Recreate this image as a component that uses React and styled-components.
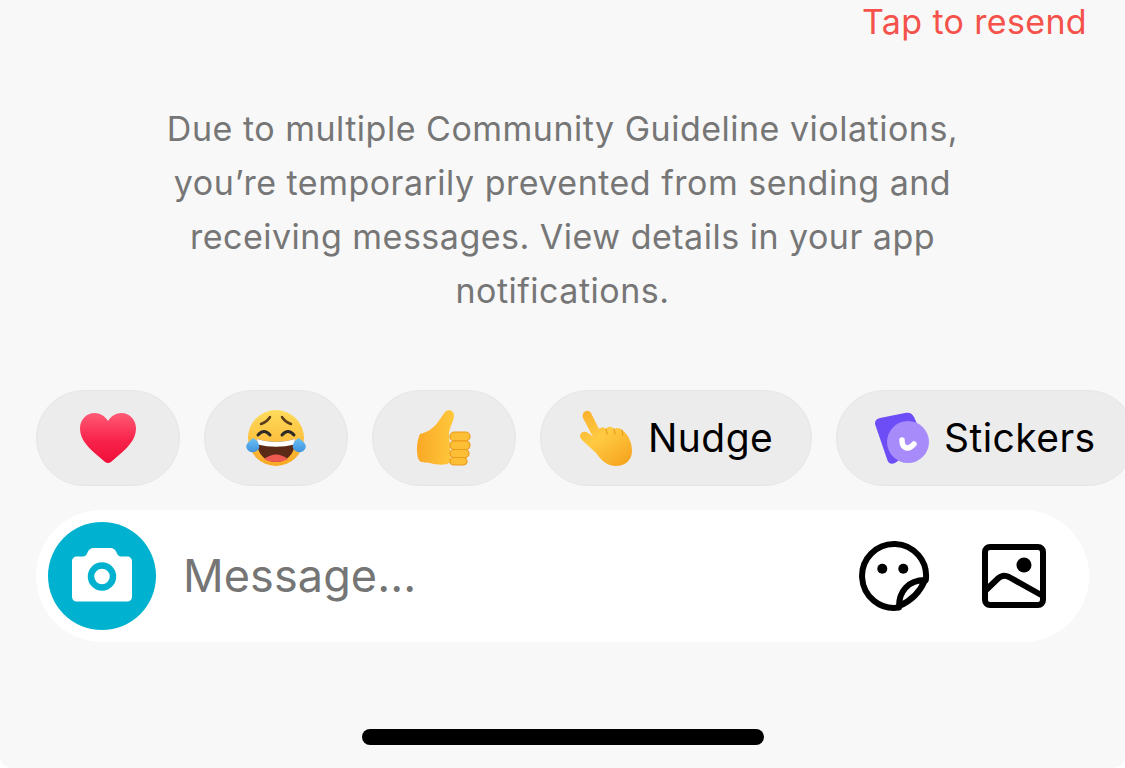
import styled, { createGlobalStyle } from 'styled-components';

const GlobalStyle = createGlobalStyle`
    html, body {
        margin: 0;
        padding: 0;
        background: #fff;
    }
    body {
        font-family: Inter, "Liberation Sans", sans-serif;
    }
`;

const chips = [
    { id: 'heart', Icon: () => <HeartEmoji />, width: 144 },
    { id: 'laugh', Icon: () => <LaughEmoji />, width: 144 },
    { id: 'thumb', Icon: () => <ThumbEmoji />, width: 144 },
    { id: 'nudge', Icon: () => <PointEmoji />, label: 'Nudge', width: 272 },
    { id: 'stickers', Icon: () => <StickerLogo />, label: 'Stickers', width: 300 },
];

const HeartEmoji = () => (
    <svg width="58" height="50" viewBox="0 0 58 50">
        <defs>
            <linearGradient id="heartFill" x1="0" y1="0" x2="0" y2="1">
                <stop offset="0" stopColor="#ff5a76" />
                <stop offset="0.55" stopColor="#f8234a" />
                <stop offset="1" stopColor="#ef0f3a" />
            </linearGradient>
        </defs>
        <path d="M29 50C27 50 25.500 48.500 22 45.500C10 35.500 1 27 1 15.500C1 6.500 7.500 0 15.500 0C21 0 26 3 29 8C32 3 37 0 42.500 0C50.500 0 57 6.500 57 15.500C57 27 48 35.500 36 45.500C32.500 48.500 31 50 29 50Z" fill="url(#heartFill)" />
    </svg>
);

const LaughEmoji = () => (
    <svg width="60" height="56" viewBox="0 0 60 56">
        <defs>
            <linearGradient id="faceFill" x1="0" y1="0" x2="0" y2="1">
                <stop offset="0" stopColor="#ffdc5c" />
                <stop offset="1" stopColor="#f9a825" />
            </linearGradient>
            <linearGradient id="tearFill" x1="0" y1="0" x2="0" y2="1">
                <stop offset="0" stopColor="#6cc0f5" />
                <stop offset="1" stopColor="#3f93de" />
            </linearGradient>
        </defs>
        <circle cx="30" cy="28" r="28" fill="url(#faceFill)" />
        <path d="M15 14Q21 12 24 7M45 14Q39 12 36 7" fill="none" stroke="#5b3d1d" strokeWidth="2.500" strokeLinecap="round" />
        <path d="M12 25Q18 18 24 25M36 25Q42 18 48 25" fill="none" stroke="#2d2a26" strokeWidth="3" strokeLinecap="round" />
        <path d="M11 29Q30 35 49 29C50 43 41 52 30 52C19 52 10 43 11 29Z" fill="#5b2a16" />
        <path d="M11 29Q30 35 49 29L48.500 34.500Q30 39 11.500 34.500Z" fill="#fff" />
        <path d="M18 49Q30 40 42 49Q37 52 30 52Q23 52 18 49Z" fill="#ef5a50" />
        <path d="M7 28C11 30 14 34 13 38C12 41 8 43 5 42C1 41 -1 37 1 34C2 32 5 30 7 28Z" fill="url(#tearFill)" />
        <path d="M53 28C49 30 46 34 47 38C48 41 52 43 55 42C59 41 61 37 59 34C58 32 55 30 53 28Z" fill="url(#tearFill)" />
    </svg>
);

const ThumbEmoji = () => (
    <svg width="54" height="56" viewBox="0 0 54 56">
        <defs>
            <linearGradient id="thumbFill" x1="0" y1="0" x2="1" y2="0">
                <stop offset="0" stopColor="#f9a825" />
                <stop offset="1" stopColor="#ffc83d" />
            </linearGradient>
        </defs>
        <path d="M3 24C10 22 16 19 21 12C24 8 26 4 29 1C32 -1 37 1 37 5C37 11 33 16 32 23L34 52C28 56 20 55 13 53C8 52 3 54 1 48C-1 40 0 30 3 24Z" fill="url(#thumbFill)" />
        <rect x="33" y="22" width="20" height="9" rx="4.500" fill="#fdbf35" stroke="#eb9a1c" strokeWidth="1.200" />
        <rect x="33" y="31" width="20" height="8.500" rx="4.200" fill="#fdbf35" stroke="#eb9a1c" strokeWidth="1.200" />
        <rect x="33" y="39.500" width="19" height="8" rx="4" fill="#fdbf35" stroke="#eb9a1c" strokeWidth="1.200" />
        <rect x="33" y="47.500" width="17" height="7.500" rx="3.700" fill="#fdbf35" stroke="#eb9a1c" strokeWidth="1.200" />
    </svg>
);

const PointEmoji = () => (
    <svg width="54" height="56" viewBox="0 0 54 56">
        <defs>
            <linearGradient id="handFill" x1="0" y1="0" x2="0.7" y2="1">
                <stop offset="0" stopColor="#f9ae2b" />
                <stop offset="0.5" stopColor="#ffcb42" />
                <stop offset="1" stopColor="#f7a823" />
            </linearGradient>
        </defs>
        <path d="M7 1C10 0 12 2 13 5L20 19C22 17 25 17 27 19C29 16 33 16 35 19C38 17 41 18 43 20C49 24 53 32 53 41C53 50 46 56 37 56C28 56 22 50 17 43L3 30C0 27 1 23 4 22C7 21 10 23 14 27L4 8C3 5 4 2 7 1Z" fill="url(#handFill)" />
        <path d="M27 19L28 24M35 19L36 24M43 20L44 25" fill="none" stroke="#e39a1c" strokeWidth="1.200" strokeLinecap="round" />
    </svg>
);

const StickerLogo = () => (
    <svg width="54" height="52" viewBox="0 0 54 52">
        <path d="M0 12C0 8 2 7 5 6L30 1C34 0 37 1 39 5L50 30L20 51C16 53 13 51 12 47Z" fill="#6d4df6" />
        <circle cx="33" cy="30" r="21" fill="#a78bfa" />
        <path d="M27 28C27 36 33 39 39 32" fill="none" stroke="#fff" strokeWidth="5.500" strokeLinecap="round" />
    </svg>
);

const CameraIcon = () => (
    <svg width="108" height="108" viewBox="0 0 108 108">
        <path d="M29 34.500h6c2 0 3-1 4-3l1-2c1-2 3-3.500 5.500-3.500h17c2.500 0 4.500 1.500 5.500 3.500l1 2c1 2 2 3 4 3h6c3 0 5 2 5 5v35c0 3-2 5-5 5H29c-3 0-5-2-5-5V39.500c0-3 2-5 5-5z" fill="#fff" />
        <circle cx="54" cy="54.500" r="11" fill="none" stroke="#00b2cf" strokeWidth="6.500" />
    </svg>
);

const FaceStickerIcon = () => (
    <svg width="72" height="72" viewBox="0 0 72 72" fill="none" stroke="#000" strokeWidth="6" strokeLinecap="round" strokeLinejoin="round">
        <path d="M41 67.500A32 32 0 1 1 67.800 40" />
        <path d="M41 66C41 52 50 40 67 40C62 52 53 61 41 66Z" />
        <circle cx="24.300" cy="28.700" r="5" fill="#000" stroke="none" />
        <circle cx="45.300" cy="28.700" r="5" fill="#000" stroke="none" />
    </svg>
);

const ImageIcon = () => (
    <svg width="64" height="64" viewBox="0 0 64 64" fill="none" stroke="#000" strokeWidth="6" strokeLinejoin="round">
        <rect x="3" y="3" width="58" height="58" rx="5" />
        <path d="M3 47L16 34.500Q21 30 27 33L61 52" />
        <circle cx="42" cy="21" r="7.500" fill="#000" stroke="none" />
    </svg>
);

const App = () => (
    <Screen>
        <GlobalStyle />
        <ResendRow>Tap to resend</ResendRow>
        <Notice>
            Due to multiple Community Guideline violations, you’re temporarily prevented from sending and receiving messages. View details in your app notifications.
        </Notice>
        <ChipRow>
            {chips.map(({ id, Icon, label, width }) => (
                <Chip key={id} $width={width} $hasLabel={!!label}>
                    <Icon />
                    {label && <ChipLabel>{label}</ChipLabel>}
                </Chip>
            ))}
        </ChipRow>
        <Composer>
            <CameraButton>
                <CameraIcon />
            </CameraButton>
            <Placeholder>Message...</Placeholder>
            <ComposerActions>
                <FaceStickerIcon />
                <ImageIcon />
            </ComposerActions>
        </Composer>
        <HomeBar />
    </Screen>
);

export default App;

const Screen = styled.div`
    width: 1125px;
    height: 768px;
    overflow: hidden;
    display: flex;
    flex-direction: column;
    background: #f8f8f8;
    border-radius: 0 0 12px 12px;
`;

const ResendRow = styled.div`
    height: 44px;
    padding-right: 38px;
    text-align: right;
    font-size: 34px;
    letter-spacing: 0.35px;
    line-height: 44px;
    color: #f4524a;
`;

const Notice = styled.p`
    width: 820px;
    margin: 58px auto 0;
    text-align: center;
    font-size: 34px;
    letter-spacing: 0.5px;
    line-height: 54px;
    color: #767676;
`;

const ChipRow = styled.div`
    display: flex;
    gap: 24px;
    margin-top: 72px;
    padding-left: 36px;
    overflow: hidden;
`;

const Chip = styled.div`
    flex: none;
    box-sizing: border-box;
    width: ${({ $width }) => $width}px;
    height: 96px;
    display: flex;
    align-items: center;
    justify-content: ${({ $hasLabel }) => ($hasLabel ? 'flex-start' : 'center')};
    gap: 15px;
    padding-left: ${({ $hasLabel }) => ($hasLabel ? '38px' : '0')};
    background: #ececec;
    border: 1.5px solid #e6e6e6;
    border-radius: 48px;
`;

const ChipLabel = styled.span`
    font-size: 39px;
    letter-spacing: 0.45px;
    line-height: 48px;
    color: #000;
`;

const Composer = styled.div`
    width: 1053px;
    height: 132px;
    margin: 24px 0 0 36px;
    box-sizing: border-box;
    padding: 0 43px 0 12px;
    display: flex;
    align-items: center;
    background: #fff;
    border-radius: 66px;
`;

const CameraButton = styled.div`
    flex: none;
    width: 108px;
    height: 108px;
    display: flex;
    border-radius: 50%;
    background: #00b2cf;
`;

const Placeholder = styled.span`
    flex: 1;
    margin-left: 27px;
    font-size: 45px;
    letter-spacing: 0.1px;
    line-height: 58px;
    color: #757575;
`;

const ComposerActions = styled.div`
    display: flex;
    align-items: center;
    gap: 52px;
`;

const HomeBar = styled.div`
    width: 402px;
    height: 16px;
    margin: 87px 0 0 362px;
    border-radius: 8px;
    background: #000;
`;
